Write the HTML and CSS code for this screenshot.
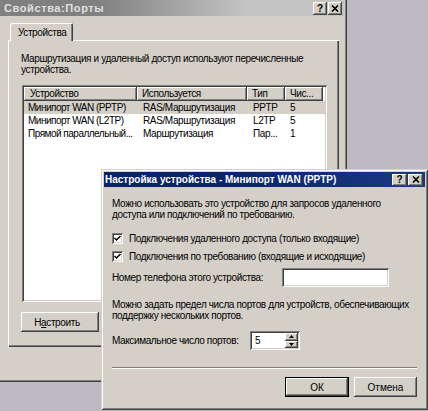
FILE: index.html
```html
<!DOCTYPE html>
<html lang="ru">
<head>
<meta charset="utf-8">
<title>Порты</title>
<link rel="stylesheet" href="styles.css">
</head>
<body>
<div class="desktop">

  <!-- Property sheet: ports -->
  <section class="window props">
    <header class="caption inactive">
      <span class="caption-text">Свойства:Порты</span>
      <span class="caption-buttons">
        <span class="cap-btn help">?</span>
        <span class="cap-btn close"><svg width="8" height="7" viewBox="0 0 8 7"><path d="M1 0.5 L7 6.5 M7 0.5 L1 6.5" stroke="#000" stroke-width="1.6"/></svg></span>
      </span>
    </header>
    <div class="props-body">
      <div class="tabs"><span class="tab active">Устройства</span></div>
      <div class="tab-panel">
        <p class="intro">Маршрутизация и удаленный доступ используют перечисленные<br>устройства.</p>
        <div class="listview">
          <div class="lv-head">
            <span class="hcell">Устройство</span>
            <span class="hcell">Используется</span>
            <span class="hcell">Тип</span>
            <span class="hcell">Чис...</span>
          </div>
          <div class="lv-row selected">
            <span class="cell">Минипорт WAN (PPTP)</span>
            <span class="cell">RAS/Маршрутизация</span>
            <span class="cell">PPTP</span>
            <span class="cell">5</span>
          </div>
          <div class="lv-row">
            <span class="cell">Минипорт WAN (L2TP)</span>
            <span class="cell">RAS/Маршрутизация</span>
            <span class="cell">L2TP</span>
            <span class="cell">5</span>
          </div>
          <div class="lv-row">
            <span class="cell">Прямой параллельный...</span>
            <span class="cell">Маршрутизация</span>
            <span class="cell">Пар...</span>
            <span class="cell">1</span>
          </div>
        </div>
        <button class="btn configure">Н<u>а</u>строить</button>
      </div>
    </div>
  </section>

  <!-- Device configuration dialog -->
  <section class="window config">
    <header class="caption active">
      <span class="caption-text">Настройка устройства - Минипорт WAN (PPTP)</span>
      <span class="caption-buttons">
        <span class="cap-btn help">?</span>
        <span class="cap-btn close"><svg width="8" height="7" viewBox="0 0 8 7"><path d="M1 0.5 L7 6.5 M7 0.5 L1 6.5" stroke="#000" stroke-width="1.6"/></svg></span>
      </span>
    </header>
    <div class="config-body">
      <p class="para">Можно использовать это устройство для запросов удаленного<br>доступа или подключений по требованию.</p>
      <label class="check first">
        <span class="box"><svg width="7" height="7" viewBox="0 0 7 7"><path d="M0.5 3 L2.5 5 L6.5 1" fill="none" stroke="#000" stroke-width="1.5"/></svg></span>
        <span>Подключения удаленного доступа (только входящие)</span>
      </label>
      <label class="check">
        <span class="box"><svg width="7" height="7" viewBox="0 0 7 7"><path d="M0.5 3 L2.5 5 L6.5 1" fill="none" stroke="#000" stroke-width="1.5"/></svg></span>
        <span>Подключения по требованию (входящие и исходящие)</span>
      </label>
      <div class="field phone">
        <span class="field-label">Номер телефона этого устройства:</span>
        <span class="input phone-input"></span>
      </div>
      <p class="para ports-note">Можно задать предел числа портов для устройств, обеспечивающих<br>поддержку нескольких портов.</p>
      <div class="field ports">
        <span class="field-label">Максимальное число портов:</span>
        <span class="input spin">
          <span class="spin-value">5</span>
          <span class="spin-btns">
            <span class="spin-btn"><svg width="5" height="3" viewBox="0 0 5 3"><path d="M2.5 0 L5 3 L0 3 Z" fill="#000"/></svg></span>
            <span class="spin-btn"><svg width="5" height="3" viewBox="0 0 5 3"><path d="M0 0 L5 0 L2.5 3 Z" fill="#000"/></svg></span>
          </span>
        </span>
      </div>
      <div class="separator"></div>
      <div class="actions">
        <button class="btn default">ОК</button>
        <button class="btn cancel">Отмена</button>
      </div>
    </div>
  </section>

</div>
</body>
</html>
```
FILE: styles.css
```css
* { box-sizing: border-box; }

html, body {
  margin: 0;
  padding: 0;
}

body {
  width: 428px;
  height: 411px;
  overflow: hidden;
  background: #bdbbc1;
  font-family: "Liberation Sans", Arial, sans-serif;
  font-size: 10px;
  line-height: 11px;
  letter-spacing: -0.38px;
  color: #000;
}

.desktop {
  position: relative;
  width: 428px;
  height: 411px;
}

p {
  margin: 0;
  white-space: nowrap;
}

/* ---------- window frame ---------- */
.window {
  position: absolute;
  display: flex;
  flex-direction: column;
  padding: 3px;
  background: #d4d0c8;
  box-shadow:
    inset 1px 1px #d4d0c8,
    inset -1px -1px #404040,
    inset 2px 2px #fff,
    inset -2px -2px #808080;
}

.props {
  left: -3px;
  top: -3px;
  width: 350px;
  height: 385px;
}

.config {
  left: 101px;
  top: 169px;
  width: 327px;
  height: 241px;
}

/* ---------- caption bar ---------- */
.caption {
  display: flex;
  align-items: center;
  flex: none;
  font-weight: bold;
}

.caption.inactive {
  height: 16px;
  padding: 0 2px 0 4px;
  font-size: 11px;
  letter-spacing: 0.6px;
  color: #e0e0e0;
  background: linear-gradient(90deg, #808080 0, #808080 28%, #c4c4c4 72%, #c4c4c4 100%);
}

.caption.active {
  height: 15px;
  padding: 0 2px 0 1px;
  font-size: 10px;
  letter-spacing: 0;
  color: #fff;
  background: linear-gradient(90deg, #0a246a 0, #0a246a 40%, #1a3a84 100%);
}

.caption-text { white-space: nowrap; }

.caption-buttons {
  margin-left: auto;
  display: flex;
  gap: 1px;
  letter-spacing: 0;
}

.cap-btn {
  display: flex;
  align-items: center;
  justify-content: center;
  width: 14px;
  height: 13px;
  background: #d4d0c8;
  color: #000;
  font-size: 10px;
  font-weight: bold;
  box-shadow:
    inset -1px -1px #404040,
    inset 1px 1px #fff,
    inset -2px -2px #808080;
}

.config .cap-btn {
  width: 15px;
  height: 12px;
}

/* ---------- property sheet ---------- */
.props-body {
  padding: 7px 0 0 8px;
}

.tabs {
  display: flex;
  padding-left: 2px;
}

.tab {
  position: relative;
  z-index: 1;
  width: 63px;
  height: 18px;
  margin-bottom: -1px;
  padding: 4px 0 0 8px;
  background: #d4d0c8;
  border-radius: 2px 2px 0 0;
  box-shadow:
    inset 1px 1px #fff,
    inset -1px 0 #404040,
    inset -2px 0 #808080;
}

.tab-panel {
  width: 331px;
  height: 307px;
  padding: 13px 12px 0 13px;
  box-shadow:
    inset 1px 1px #fff,
    inset -1px -1px #404040,
    inset -2px -2px #808080;
}

.listview {
  width: 305px;
  height: 217px;
  margin: 10px 0 0 1px;
  padding: 2px;
  background: #fff;
  box-shadow:
    inset 1px 1px #808080,
    inset -1px -1px #fff,
    inset 2px 2px #404040,
    inset -2px -2px #d4d0c8;
}

.lv-head,
.lv-row {
  display: grid;
  grid-template-columns: 113px 110px 38px 38px;
}

.hcell {
  height: 14px;
  padding: 1px 0 0 5px;
  line-height: 12px;
  background: #d4d0c8;
  white-space: nowrap;
  overflow: hidden;
  box-shadow:
    inset -1px -1px #404040,
    inset 1px 1px #fff,
    inset -2px -2px #808080;
}

.hcell:first-child { padding-left: 6px; }

.lv-row { height: 13px; line-height: 13px; }

.lv-row.selected { background: #d4d0c8; }

.cell {
  padding-left: 6px;
  white-space: nowrap;
  overflow: hidden;
}

.cell:first-child { padding-left: 4px; letter-spacing: -0.5px; }
.cell:last-child { padding-left: 5px; }

/* ---------- push buttons ---------- */
.btn {
  display: flex;
  align-items: center;
  justify-content: center;
  padding: 0;
  border: 0;
  background: #d4d0c8;
  font: inherit;
  letter-spacing: inherit;
  color: #000;
  box-shadow:
    inset -1px -1px #404040,
    inset 1px 1px #fff,
    inset -2px -2px #808080;
}

.configure {
  width: 78px;
  height: 20px;
  margin-top: 10px;
  padding-right: 6px;
}

/* ---------- configuration dialog ---------- */
.config-body {
  display: flex;
  flex-direction: column;
  padding: 11px 8px 10px;
}

.check {
  display: flex;
  align-items: center;
  gap: 6px;
  height: 13px;
  margin-top: 5px;
  white-space: nowrap;
}

.check.first { margin-top: 12px; }

.box {
  display: flex;
  align-items: center;
  justify-content: center;
  flex: none;
  width: 11px;
  height: 11px;
  background: #fff;
  box-shadow:
    inset 1px 1px #808080,
    inset -1px -1px #fff,
    inset 2px 2px #404040,
    inset -2px -2px #d4d0c8;
}

.field {
  display: flex;
  align-items: center;
  white-space: nowrap;
}

.phone { margin-top: 5px; height: 19px; }
.phone .field-label { width: 170px; }

.ports-note { margin-top: 12px; }

.ports { margin-top: 10px; height: 19px; }
.ports .field-label { width: 138px; }

.input {
  display: flex;
  height: 19px;
  background: #fff;
  box-shadow:
    inset 1px 1px #808080,
    inset -1px -1px #fff,
    inset 2px 2px #404040,
    inset -2px -2px #d4d0c8;
}

.phone-input { width: 107px; }

.spin {
  width: 50px;
  padding: 2px;
  align-items: stretch;
}

.spin-value {
  flex: 1;
  padding: 2px 0 0 3px;
}

.spin-btns {
  display: flex;
  flex-direction: column;
  width: 13px;
}

.spin-btn {
  flex: 1;
  display: flex;
  align-items: center;
  justify-content: center;
  background: #d4d0c8;
  box-shadow:
    inset -1px -1px #404040,
    inset 1px 1px #fff,
    inset -2px -2px #808080;
}

.separator {
  height: 2px;
  margin-top: 17px;
  border-top: 1px solid #808080;
  border-bottom: 1px solid #fff;
}

.actions {
  display: flex;
  justify-content: flex-end;
  gap: 5px;
  margin-top: 8px;
}

.actions .btn {
  height: 20px;
  letter-spacing: 0;
}

.default {
  width: 64px;
  box-shadow:
    inset 0 0 0 1px #000,
    inset -2px -2px #404040,
    inset 2px 2px #fff,
    inset -3px -3px #808080;
}

.cancel { width: 63px; }
```
